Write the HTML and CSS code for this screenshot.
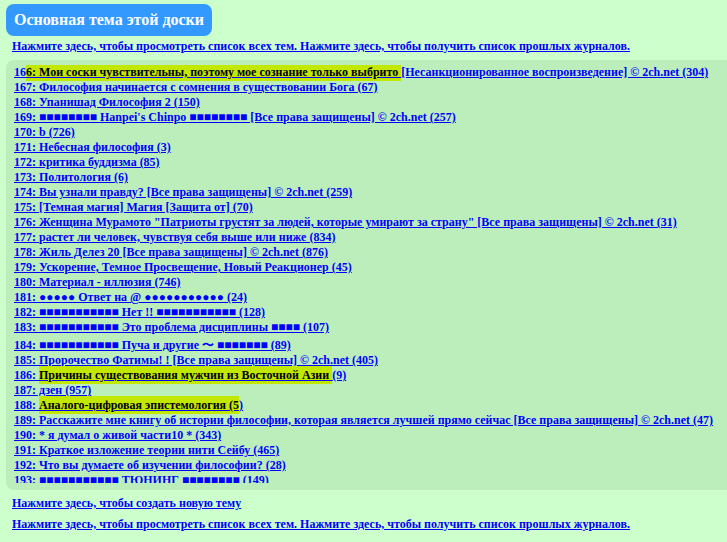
FILE: index.html
```html
<!DOCTYPE html>
<html lang="ru">
<head>
<meta charset="utf-8">
<title>Основная тема этой доски</title>
<link rel="stylesheet" href="styles.css">
</head>
<body>
<div class="board-title">Основная тема этой доски</div>
<p class="nav"><a href="#">Нажмите здесь, чтобы просмотреть список всех тем. Нажмите здесь, чтобы получить список прошлых журналов.</a></p>

<div class="threads">
  <div class="thread-list">
    <a class="thread" href="#">16<mark class="first">6: Мои соски чувствительны, поэтому мое сознание только выбрито </mark>[Несанкционированное воспроизведение] © 2ch.net (304)</a>
    <a class="thread" href="#">167: Философия начинается с сомнения в существовании Бога (67)</a>
    <a class="thread" href="#">168: Упанишад Философия 2 (150)</a>
    <a class="thread" href="#">169: ■■■■■■■■ Hanpei's Chinpo ■■■■■■■■ [Все права защищены] © 2ch.net (257)</a>
    <a class="thread" href="#">170: b (726)</a>
    <a class="thread" href="#">171: Небесная философия (3)</a>
    <a class="thread" href="#">172: критика буддизма (85)</a>
    <a class="thread" href="#">173: Политология (6)</a>
    <a class="thread" href="#">174: Вы узнали правду? [Все права защищены] © 2ch.net (259)</a>
    <a class="thread" href="#">175: [Темная магия] Магия [Защита от] (70)</a>
    <a class="thread" href="#">176: Женщина Мурамото "Патриоты грустят за людей, которые умирают за страну" [Все права защищены] © 2ch.net (31)</a>
    <a class="thread" href="#">177: растет ли человек, чувствуя себя выше или ниже (834)</a>
    <a class="thread" href="#">178: Жиль Делез 20 [Все права защищены] © 2ch.net (876)</a>
    <a class="thread" href="#">179: Ускорение, Темное Просвещение, Новый Реакционер (45)</a>
    <a class="thread" href="#">180: Материал - иллюзия (746)</a>
    <a class="thread" href="#">181: ●●●●● Ответ на @ ●●●●●●●●●●● (24)</a>
    <a class="thread" href="#">182: ■■■■■■■■■■■ Нет !! ■■■■■■■■■■■ (128)</a>
    <a class="thread" href="#">183: ■■■■■■■■■■■ Это проблема дисциплины ■■■■ (107)</a>
    <a class="thread tall" href="#">184: ■■■■■■■■■■■ Пуча и другие 〜 ■■■■■■■ (89)</a>
    <a class="thread" href="#">185: Пророчество Фатимы! ! [Все права защищены] © 2ch.net (405)</a>
    <a class="thread" href="#">186: <mark>Причины существования мужчин из Восточной Азии </mark>(9)</a>
    <a class="thread" href="#">187: дзен (957)</a>
    <a class="thread" href="#">188: <mark>Аналого-цифровая эпистемология (5</mark>)</a>
    <a class="thread" href="#">189: Расскажите мне книгу об истории философии, которая является лучшей прямо сейчас [Все права защищены] © 2ch.net (47)</a>
    <a class="thread" href="#">190: * я думал о живой части10 * (343)</a>
    <a class="thread" href="#">191: Краткое изложение теории нити Сейбу (465)</a>
    <a class="thread" href="#">192: Что вы думаете об изучении философии? (28)</a>
    <a class="thread" href="#">193: ■■■■■■■■■■■ ТЮНИНГ ■■■■■■■■ (149)</a>
  </div>
</div>

<p class="nav new"><a href="#">Нажмите здесь, чтобы создать новую тему</a></p>
<p class="nav foot"><a href="#">Нажмите здесь, чтобы просмотреть список всех тем. Нажмите здесь, чтобы получить список прошлых журналов.</a></p>
</body>
</html>
```

FILE: styles.css
```css
html, body {
  margin: 0;
  padding: 0;
}

body {
  background: #ccffcc;
  font-family: "Liberation Serif", "Times New Roman", serif;
  font-weight: bold;
  font-size: 12px;
  padding: 4px 0 0 6px;
}

a {
  color: #0000ff;
  text-decoration: underline;
}

.board-title {
  display: inline-block;
  background: #3399ff;
  color: #ffffff;
  font-size: 16px;
  height: 32px;
  line-height: 32px;
  padding: 0 8px;
  border-radius: 8px;
}

.nav {
  margin: 2px 0 0 6px;
  line-height: 16px;
}

.nav.new {
  margin-top: 5px;
}

.nav.foot {
  margin-top: 5px;
}

.threads {
  background: #bbeebb;
  border-radius: 8px 0 0 8px;
  margin-top: 6px;
  padding: 5px 0 7px 8px;
}

.thread-list {
  height: 418px;
  overflow: hidden;
  display: flex;
  flex-direction: column;
  line-height: 15px;
}

.thread {
  display: block;
  white-space: nowrap;
}

.thread.tall {
  margin-top: 3px;
}

mark {
  background: #c2e800;
  color: #000000;
  padding: 2px 0;
}

mark.first {
  padding-top: 4px;
}
```
